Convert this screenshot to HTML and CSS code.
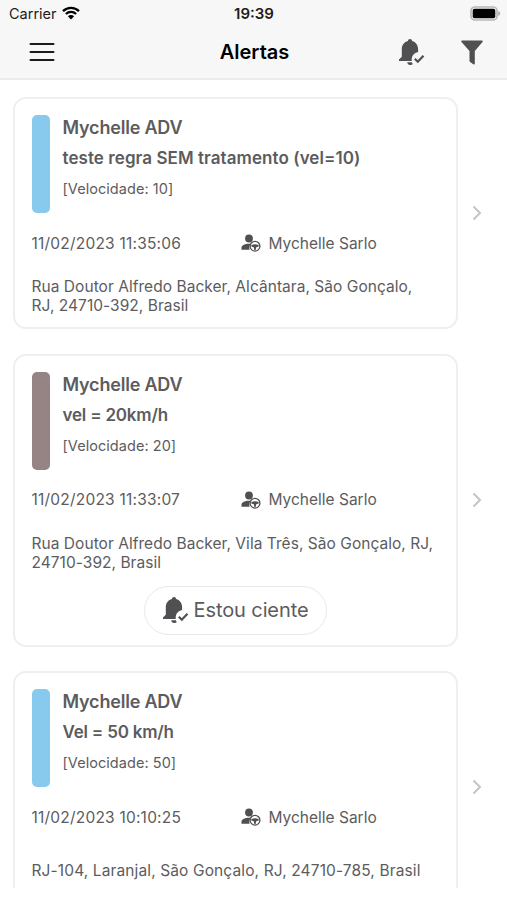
FILE: index.html
```
<!DOCTYPE html>
<html lang="pt-BR">
<head>
  <meta charset="UTF-8">
  <meta name="viewport" content="width=device-width, initial-scale=1.0">
  <title>Alertas</title>
  <link rel="stylesheet" href="styles.css">
</head>
<body>
  <svg class="symbols">
    <symbol id="bell" viewBox="0 0 26 28">
      <path d="M11 1c1.200 0 1.900.7 2.100 1.900 3.700 1 5.900 4 6 8.100v2.900c-4 .8-6.400 3.800-6.400 7.700 0 .5 0 1 .1 1.400H0v-1.500l2.800-2.800v-7.700c.1-4.100 2.300-7.100 6.100-8.100C9.100 1.700 9.800 1 11 1z"/>
      <path d="M8.300 24.300h4.500l.9 1.700c-.5.700-1.400 1.100-2.700 1.100-1.600 0-2.600-1-2.700-2.800z"/>
      <path class="tick" d="M15.800 20.700l3 3 5.700-6"/>
    </symbol>
    <symbol id="driver" viewBox="0 0 20 18">
      <circle cx="8" cy="4.500" r="3.900"/>
      <path d="M.5 15.800v-2c0-2.600 3.500-3.800 7-4 .9 0 1.500.1 2.200.3-1.300 1.600-1.700 3.400-1.100 5.700z"/>
      <circle class="wheel" cx="14" cy="12.200" r="4.900"/>
      <path d="M10.300 11.200c2.300-1.200 5.100-1.200 7.400 0v1.300l-2.500.7-.6 3h-1.200l-.6-3-2.500-.7z"/>
    </symbol>
    <symbol id="chevron" viewBox="0 0 10 16">
      <path d="M1.500 1.500L8 8l-6.500 6.500"/>
    </symbol>
  </svg>

  <header class="header">
    <div class="status">
      <div class="carrier">
        <span>Carrier</span>
        <svg class="wifi" viewBox="0 0 18 14">
          <path d="M1 5.100c4.500-4.400 11.500-4.400 16 0M3.900 8c2.900-2.800 7.300-2.800 10.200 0"/>
          <path class="dot" d="M5.900 10.300c1.800-1.600 4.400-1.600 6.200 0L9 13.500z"/>
        </svg>
      </div>
      <span class="time">19:39</span>
      <svg class="battery" viewBox="0 0 31 15">
        <rect class="shell" x="1" y="1" width="26" height="13" rx="4"/>
        <rect x="2.700" y="2.700" width="22.600" height="9.600" rx="2"/>
        <path class="cap" d="M28.200 5c1.300.4 2 1.300 2 2.500s-.7 2.100-2 2.500z"/>
      </svg>
    </div>
    <div class="navbar">
      <svg class="menu" viewBox="0 0 26 20">
        <path d="M1.500 2h23M1.500 10h23M1.500 18h23"/>
      </svg>
      <h1>Alertas</h1>
      <div class="actions">
        <svg class="bell"><use href="#bell"/></svg>
        <svg class="filter" viewBox="0 0 22 25">
          <path d="M1 .5h20c.8 0 1 .8.500 1.500l-7.700 9v12.600c0 .8-.8 1.200-1.500.7l-3.200-2.400c-.4-.3-.6-.6-.6-1.100V11L.5 2C0 1.300.2.5 1 .5z"/>
        </svg>
      </div>
    </div>
  </header>

  <main class="list">
    <div class="row">
      <article class="card">
        <div class="summary">
          <div class="level blue"></div>
          <div class="info">
            <h2>Mychelle ADV</h2>
            <h3 class="long">teste regra SEM tratamento (vel=10)</h3>
            <p>[Velocidade: 10]</p>
          </div>
        </div>
        <div class="details">
          <span class="date">11/02/2023 11:35:06</span>
          <svg class="driver"><use href="#driver"/></svg>
          <span class="name">Mychelle Sarlo</span>
        </div>
        <div class="address"><p>Rua Doutor Alfredo Backer, Alcântara, São Gonçalo,<br>RJ, 24710-392, Brasil</p></div>
      </article>
      <svg class="chevron"><use href="#chevron"/></svg>
    </div>

    <div class="row">
      <article class="card">
        <div class="summary">
          <div class="level brown"></div>
          <div class="info">
            <h2>Mychelle ADV</h2>
            <h3>vel = 20km/h</h3>
            <p>[Velocidade: 20]</p>
          </div>
        </div>
        <div class="details">
          <span class="date">11/02/2023 11:33:07</span>
          <svg class="driver"><use href="#driver"/></svg>
          <span class="name">Mychelle Sarlo</span>
        </div>
        <div class="address"><p>Rua Doutor Alfredo Backer, Vila Três, São Gonçalo, RJ,<br>24710-392, Brasil</p></div>
        <button class="aware">
          <svg class="bell"><use href="#bell"/></svg>
          <span>Estou ciente</span>
        </button>
      </article>
      <svg class="chevron"><use href="#chevron"/></svg>
    </div>

    <div class="row">
      <article class="card">
        <div class="summary">
          <div class="level blue"></div>
          <div class="info">
            <h2>Mychelle ADV</h2>
            <h3>Vel = 50 km/h</h3>
            <p>[Velocidade: 50]</p>
          </div>
        </div>
        <div class="details">
          <span class="date">11/02/2023 10:10:25</span>
          <svg class="driver"><use href="#driver"/></svg>
          <span class="name">Mychelle Sarlo</span>
        </div>
        <div class="address single"><p>RJ-104, Laranjal, São Gonçalo, RJ, 24710-785, Brasil</p></div>
      </article>
      <svg class="chevron"><use href="#chevron"/></svg>
    </div>
  </main>
</body>
</html>
```
FILE: styles.css
```
* {
  box-sizing: border-box;
  margin: 0;
  padding: 0;
}
body {
  width: 507px;
  height: 900px;
  overflow: hidden;
  background: #fff;
  color: #5c5c5e;
  font-family: Inter, "Liberation Sans", sans-serif;
  white-space: nowrap;
}
svg {
  display: block;
  flex: none;
  fill: #505052;
}
.symbols {
  width: 0;
  height: 0;
}
.header {
  height: 80px;
  background: #f7f7f7;
  border-bottom: 2px solid #ebebeb;
}
.status {
  display: grid;
  grid-template-columns: 1fr auto 1fr;
  align-items: center;
  height: 27px;
  padding: 0 7px 0 9px;
  color: #1c1c1c;
}
.carrier {
  display: flex;
  align-items: center;
  gap: 5px;
  font-size: 14.5px;
}
.wifi {
  width: 18px;
  height: 14px;
  margin-top: -2px;
  fill: none;
  stroke: #000;
  stroke-width: 2.3;
}
.wifi .dot {
  fill: #000;
  stroke: none;
}
.time {
  margin-left: -1px;
  font-size: 15px;
  font-weight: 600;
}
.battery {
  width: 31px;
  height: 15px;
  justify-self: end;
  margin-right: -1px;
  fill: #000;
}
.battery .shell {
  fill: #f7f7f7;
  stroke: #b8b8b8;
  stroke-width: 1.7;
}
.battery .cap {
  fill: #b0b0b0;
}
.navbar {
  display: grid;
  grid-template-columns: 1fr auto 1fr;
  align-items: center;
  height: 50px;
  padding: 0 24.5px 0 28.5px;
}
.menu {
  width: 26px;
  height: 20px;
  stroke: #1a1a1a;
  stroke-width: 2;
  stroke-linecap: round;
}
h1 {
  margin-left: -2px;
  color: #000;
  font-size: 20px;
  font-weight: 600;
}
.actions {
  display: flex;
  align-items: center;
  justify-content: flex-end;
  gap: 35.5px;
}
.bell {
  width: 26px;
  height: 28px;
}
.tick {
  fill: none;
  stroke: #505052;
  stroke-width: 2.2;
}
.filter {
  width: 22px;
  height: 25px;
}
.list {
  display: flex;
  flex-direction: column;
  gap: 24.5px;
  height: 808px;
  padding: 17px 25px 0 13px;
  overflow: hidden;
}
.row {
  display: flex;
  flex: none;
  align-items: center;
  justify-content: space-between;
}
.card {
  width: 445px;
  padding: 16px 16.5px 12px;
  border: 2px solid #efefef;
  border-radius: 13px;
}
.summary {
  display: flex;
  gap: 12.5px;
}
.level {
  width: 18.5px;
  height: 98px;
  border-radius: 5px;
}
.blue {
  background: #87caed;
}
.brown {
  background: #968384;
}
h2,
h3 {
  font-weight: 600;
  line-height: 31px;
}
.info {
  margin-top: -3px;
}
h2 {
  font-size: 18px;
  letter-spacing: -0.2px;
}
h3 {
  font-size: 17px;
  letter-spacing: -0.2px;
}
.long {
  letter-spacing: 0.07px;
}
.info p {
  font-size: 14.5px;
  line-height: 30px;
  letter-spacing: 0.05px;
}
.details {
  display: flex;
  align-items: center;
  height: 20px;
  margin-top: 20px;
  font-size: 15.5px;
}
.date {
  width: 209.5px;
  letter-spacing: 0.21px;
}
.driver {
  width: 20px;
  height: 18px;
  margin-right: 7.5px;
}
.wheel {
  fill: #fff;
  stroke: #505052;
  stroke-width: 1.3;
}
.address {
  display: flex;
  align-items: center;
  height: 38px;
  margin-top: 24px;
  font-size: 15.5px;
  line-height: 19px;
  letter-spacing: 0.04px;
}
.single {
  letter-spacing: 0.12px;
}
.aware {
  display: flex;
  align-items: center;
  justify-content: center;
  gap: 5px;
  width: 183px;
  height: 49px;
  margin: 14px auto -2px;
  border: 1.5px solid #e8e8e8;
  border-radius: 25px;
  background: #fff;
  color: #5c5c5e;
  font-family: inherit;
  font-size: 20px;
  letter-spacing: -0.1px;
}
.chevron {
  width: 10px;
  height: 16px;
  fill: none;
  stroke: #c4c4c6;
  stroke-width: 2;
}
```
